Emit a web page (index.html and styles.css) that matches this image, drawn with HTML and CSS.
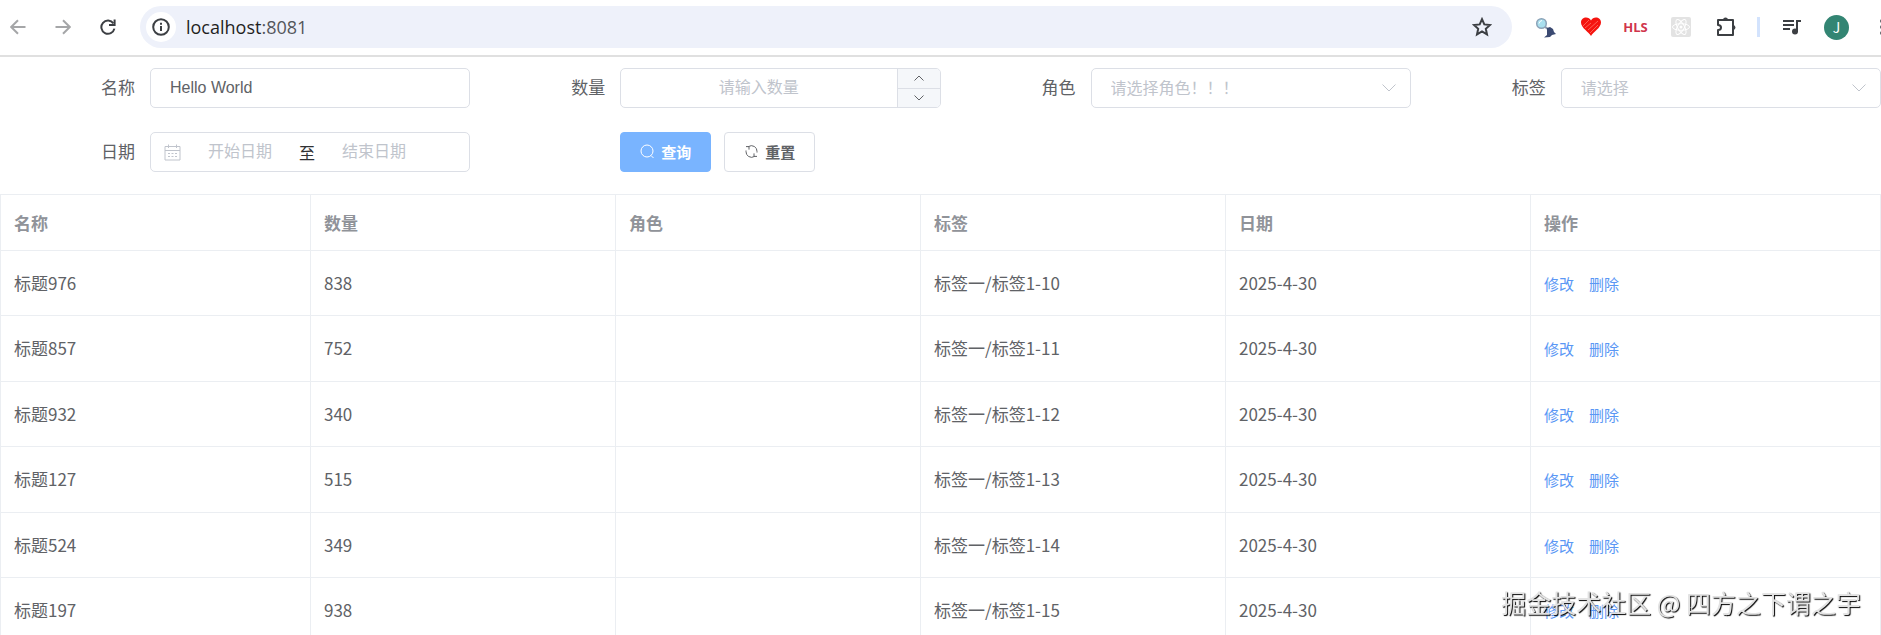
FILE: index.html
```html
<!DOCTYPE html>
<html lang="zh-CN">
<head>
    <meta charset="UTF-8">
    <meta name="viewport" content="width=device-width, initial-scale=1.0">
    <title>localhost:8081</title>
    <link rel="stylesheet" href="styles.css">
</head>
<body>

<header class="toolbar">
    <button class="nav-button muted" aria-label="后退">
        <svg width="16" height="16" viewBox="0 0 16 16"><path d="M15.5 8H1.500M8 1.200 1.200 8 8 14.800" /></svg>
    </button>
    <button class="nav-button muted" aria-label="前进">
        <svg width="16" height="16" viewBox="0 0 16 16"><path d="M.5 8h14M8 1.200 14.800 8 8 14.800" /></svg>
    </button>
    <button class="nav-button" aria-label="刷新">
        <svg width="16" height="16" viewBox="0 0 16 16"><path d="M13.4 4.400A6.600 6.600 0 1 0 14.400 9.600" /><path d="M14.6.500v5.600H9" /></svg>
    </button>
    <div class="omnibox">
        <button class="site-info" aria-label="网站信息">
            <svg width="18" height="18" viewBox="0 0 18 18"><circle cx="9" cy="9" r="7.8" /><path d="M9 8v5M9 4.800v2" /></svg>
        </button>
        <a class="address" href="#"><span class="host">localhost</span>:8081</a>
        <button class="star" aria-label="收藏">
            <svg width="20" height="20" viewBox="0 0 20 20"><path d="m10 2.200 2.300 5.200 5.700.6-4.200 3.800 1.200 5.600-5-2.900-5 2.900 1.200-5.600L2 8l5.700-.6z" /></svg>
        </button>
    </div>
    <div class="extensions">
        <button class="ext" aria-label="搜索扩展">
            <svg width="22" height="22" viewBox="0 0 22 22">
                <path d="m9 10 5 4" stroke="#8494a8" stroke-width="2" />
                <path d="m12 12 3-1 3 2 1 3 2 2-4 1-2 2-6 .5 3-2.500z" fill="#3b4a72" />
                <circle cx="6.500" cy="7.500" r="4.800" fill="#a9dfee" stroke="#8ba3b8" stroke-width="1.500" />
                <path d="M4 7.500q1-3 3-3" stroke="#fff" fill="none" />
            </svg>
        </button>
        <button class="ext" aria-label="心形扩展">
            <svg width="22" height="22" viewBox="0 0 22 22">
                <path d="M11 20C9 16 1 12 1 6.500 1 .5 9 0 11 4.500 13 0 21 .5 21 6.500 21 12 13 16 11 20z" fill="#f5140f" />
                <path d="m3 10 6-6M5 12l6-5M8 14l10-9M10 17l8-8" stroke="#ff7468" stroke-width=".8" />
            </svg>
        </button>
        <button class="ext hls">HLS</button>
        <button class="ext" aria-label="React">
            <svg width="22" height="22" viewBox="0 0 22 22">
                <rect x="1" y="1" width="20" height="20" rx="2" fill="#e3e3e3" />
                <g fill="none" stroke="#fff">
                    <ellipse cx="11" cy="11" rx="8.500" ry="3.300" />
                    <ellipse cx="11" cy="11" rx="8.500" ry="3.300" transform="rotate(60 11 11)" />
                    <ellipse cx="11" cy="11" rx="8.500" ry="3.300" transform="rotate(120 11 11)" />
                </g>
                <circle cx="11" cy="11" r="1.500" fill="#fff" />
            </svg>
        </button>
        <button class="ext" aria-label="扩展程序">
            <svg width="22" height="22" viewBox="0 0 22 22">
                <path d="M3 4h15v15H3v-5q3 0 3-2.500T3 9z" fill="none" stroke="#3c3f43" stroke-width="2" stroke-linejoin="round" />
                <path d="M8 4a2.500 2.500 0 0 1 5 0zM18 9a2.500 2.500 0 0 1 0 5z" fill="#3c3f43" />
            </svg>
        </button>
        <span class="divider"></span>
        <button class="ext" aria-label="媒体控制">
            <svg width="20" height="18" viewBox="0 0 20 18">
                <path d="M1 3h11M1 7h11M1 11h7" stroke="#3c3f43" stroke-width="2" />
                <path d="M15 14V3h4" fill="none" stroke="#3c3f43" stroke-width="2" />
                <circle cx="13" cy="13.500" r="3" fill="#3c3f43" />
            </svg>
        </button>
        <button class="ext"><span class="avatar">J</span></button>
        <button class="ext" aria-label="菜单">
            <svg width="6" height="18" viewBox="0 0 6 18" fill="#5f6368"><circle cx="3" cy="3" r="2" /><circle cx="3" cy="9" r="2" /><circle cx="3" cy="15" r="2" /></svg>
        </button>
    </div>
</header>

<form class="search-form">
    <div class="form-item">
        <label for="name">名称</label>
        <input class="control" id="name" type="text" value="Hello World">
    </div>
    <div class="form-item">
        <label for="amount">数量</label>
        <div class="control number">
            <input id="amount" type="text" inputmode="numeric" placeholder="请输入数量">
            <div class="steps">
                <button type="button" aria-label="增加">
                    <svg width="10" height="6" viewBox="0 0 10 6"><path d="M.5 5.500 5 1l4.500 4.500" /></svg>
                </button>
                <button type="button" aria-label="减少">
                    <svg width="10" height="6" viewBox="0 0 10 6"><path d="M.5.500 5 5 9.500.500" /></svg>
                </button>
            </div>
        </div>
    </div>
    <div class="form-item">
        <label for="role">角色</label>
        <div class="select">
            <select class="control" id="role"><option>请选择角色！！！</option></select>
            <svg class="chevron" width="14" height="8" viewBox="0 0 14 8"><path d="M.5.500 7 7 13.500.500" /></svg>
        </div>
    </div>
    <div class="form-item">
        <label for="tag">标签</label>
        <div class="select">
            <select class="control" id="tag"><option>请选择</option></select>
            <svg class="chevron" width="14" height="8" viewBox="0 0 14 8"><path d="M.5.500 7 7 13.500.500" /></svg>
        </div>
    </div>
    <div class="form-item">
        <label for="start">日期</label>
        <div class="control range">
            <svg width="17" height="17" viewBox="0 0 17 17"><path d="M1 2.500h15v13.500H1zM1 6.500h15M4.500.500v3.500M12.500.500v3.500M4 9.500h2M7.500 9.500h2M11 9.500h2M4 12.500h2M7.500 12.500h2M11 12.500h2" /></svg>
            <input id="start" type="text" placeholder="开始日期">
            <span class="range-separator">至</span>
            <input type="text" aria-label="结束日期" placeholder="结束日期">
        </div>
    </div>
    <div class="form-item actions">
        <button class="button primary" type="button">
            <svg width="15" height="15" viewBox="0 0 15 15"><circle cx="7" cy="7" r="6" /><path d="m11 11.500 2.500 2.500" /></svg>
            查询
        </button>
        <button class="button" type="reset">
            <svg width="15" height="15" viewBox="0 0 15 15"><path d="M4.500 2.600A5.500 5.500 0 0 1 13 7.500v1M2 6.500v1A5.500 5.500 0 0 0 10.500 12.400M2 2.600h3v3M13 12.400h-3v-3" /></svg>
            重置
        </button>
    </div>
</form>

<table class="data-table">
    <thead>
        <tr>
            <th class="col-name">名称</th>
            <th>数量</th>
            <th>角色</th>
            <th>标签</th>
            <th>日期</th>
            <th class="col-actions">操作</th>
        </tr>
    </thead>
    <tbody>
        <tr><td>标题976</td><td>838</td><td></td><td>标签一/标签1-10</td><td>2025-4-30</td><td><a href="#">修改</a><a href="#">删除</a></td></tr>
        <tr><td>标题857</td><td>752</td><td></td><td>标签一/标签1-11</td><td>2025-4-30</td><td><a href="#">修改</a><a href="#">删除</a></td></tr>
        <tr><td>标题932</td><td>340</td><td></td><td>标签一/标签1-12</td><td>2025-4-30</td><td><a href="#">修改</a><a href="#">删除</a></td></tr>
        <tr><td>标题127</td><td>515</td><td></td><td>标签一/标签1-13</td><td>2025-4-30</td><td><a href="#">修改</a><a href="#">删除</a></td></tr>
        <tr><td>标题524</td><td>349</td><td></td><td>标签一/标签1-14</td><td>2025-4-30</td><td><a href="#">修改</a><a href="#">删除</a></td></tr>
        <tr><td>标题197</td><td>938</td><td></td><td>标签一/标签1-15</td><td>2025-4-30</td><td><a href="#">修改</a><a href="#">删除</a></td></tr>
    </tbody>
</table>

<div class="watermark">掘金技术社区 @ 四方之下谓之宇</div>

</body>
</html>
```
FILE: styles.css
```css
* {
    box-sizing: border-box;
}

body {
    margin: 0;
    height: 100vh;
    overflow: hidden;
    background: #fff;
    color: #606266;
    font-family: "Noto Sans CJK SC", sans-serif;
    font-size: 17px;
}

button, input, select {
    font-family: inherit;
}

button {
    cursor: pointer;
}

a {
    text-decoration: none;
}

/* browser toolbar */
.toolbar {
    display: flex;
    align-items: center;
    height: 57px;
    padding-bottom: 1px;
    border-bottom: 2px solid #e0e0e0;
}

.nav-button, .ext, .site-info, .star {
    display: flex;
    flex: none;
    align-items: center;
    justify-content: center;
    padding: 0;
    border: none;
    background: none;
}

.nav-button {
    width: 35px;
    margin-right: 10px;
}

.nav-button svg, .site-info svg, .star svg {
    fill: none;
    stroke: #3c3f43;
    stroke-width: 2;
}

.nav-button.muted svg {
    stroke: #a5a6a8;
}

.omnibox {
    display: flex;
    flex: 1;
    align-items: center;
    height: 42px;
    margin-left: 5px;
    padding: 0 20px 0 6px;
    border-radius: 21px;
    background: #eef1fa;
}

.site-info {
    width: 30px;
    height: 30px;
    border-radius: 50%;
    background: #fff;
}

.address {
    flex: 1;
    margin-left: 10px;
    color: #54565a;
    font-family: "Open Sans", sans-serif;
    font-size: 18px;
}

.host {
    color: #1f1f1f;
}

.extensions {
    display: flex;
    flex: none;
    align-items: center;
    width: 369px;
    padding-left: 11px;
}

.ext {
    width: 45px;
}

.hls {
    color: #d0354c;
    font-family: "Open Sans", sans-serif;
    font-size: 13px;
    font-weight: bold;
}

.divider {
    flex: none;
    width: 3px;
    height: 20px;
    margin: 0 9px;
    background: #d3e3fd;
}

.avatar {
    width: 25px;
    height: 25px;
    border-radius: 50%;
    background: #338573;
    color: #fff;
    font-size: 14px;
    line-height: 25px;
}

/* search form */
.search-form {
    display: grid;
    grid-template-columns: repeat(4, 1fr);
    row-gap: 24px;
    padding: 11px 0 22px;
}

.form-item {
    display: grid;
    grid-template-columns: 150px 1fr;
    align-items: center;
    height: 40px;
}

.form-item label {
    padding: 0 15px 3px 0;
    text-align: right;
}

.control {
    width: 100%;
    height: 40px;
    padding: 0 19px;
    border: 1px solid #dcdfe6;
    border-radius: 5px;
    background: #fff;
    color: #606266;
    font-family: "Liberation Sans", "Noto Sans CJK SC", sans-serif;
    font-size: 16px;
    outline: none;
}

.control input {
    min-width: 0;
    padding: 0;
    border: none;
    background: none;
    font-size: 16px;
    text-align: center;
    outline: none;
}

input::placeholder {
    color: #c0c4cc;
}

.number {
    display: flex;
    padding: 0;
    overflow: hidden;
}

.number input {
    flex: 1;
}

.steps {
    display: flex;
    flex-direction: column;
    width: 43px;
    border-left: 1px solid #dcdfe6;
}

.steps button {
    display: flex;
    flex: 1;
    align-items: center;
    justify-content: center;
    padding: 0;
    border: none;
    background: #f5f7fa;
}

.steps button + button {
    border-top: 1px solid #dcdfe6;
}

.steps svg {
    fill: none;
    stroke: #606266;
}

.select {
    position: relative;
}

.select select {
    display: block;
    appearance: none;
    color: #c0c4cc;
}

.chevron {
    position: absolute;
    top: 16px;
    right: 15px;
    fill: none;
    stroke: #c0c4cc;
    pointer-events: none;
}

.range {
    display: flex;
    align-items: center;
    padding: 0 13px;
}

.range svg {
    flex: none;
    fill: none;
    stroke: #c0c4cc;
}

.range input {
    flex: 0 1 118px;
}

.range-separator {
    color: #303133;
}

.actions {
    display: flex;
    gap: 13px;
    padding-left: 150px;
}

.button {
    display: flex;
    align-items: center;
    gap: 6px;
    height: 40px;
    padding: 0 19px 2px;
    border: 1px solid #dcdfe6;
    border-radius: 4px;
    background: #fff;
    color: #606266;
    font-size: 15px;
    font-weight: bold;
}

.button svg {
    fill: none;
    stroke: currentColor;
}

.primary {
    border-color: #79b4ff;
    background: #79b4ff;
    color: #fff;
}

/* table */
.data-table {
    width: 100%;
    border-collapse: separate;
    border-spacing: 0;
    border-top: 1px solid #ebeef2;
    border-left: 1px solid #ebeef2;
    table-layout: fixed;
}

.data-table th, .data-table td {
    height: 65px;
    padding: 0 13px 2px;
    border-right: 1px solid #ebeef2;
    border-bottom: 1px solid #ebeef2;
    text-align: left;
}

.data-table tr:nth-child(even) td {
    height: 66px;
}

.data-table th {
    height: 56px;
    padding-bottom: 0;
    color: #909399;
}

.data-table .col-name {
    width: 310px;
}

.data-table .col-actions {
    width: 350px;
}

.data-table a {
    margin-right: 15px;
    color: #5a97f5;
    font-size: 15px;
}

.watermark {
    position: fixed;
    right: 20px;
    bottom: 15px;
    color: #e2e2e2;
    font-size: 25px;
    text-shadow: 1px 1px 1px #000;
}
```
